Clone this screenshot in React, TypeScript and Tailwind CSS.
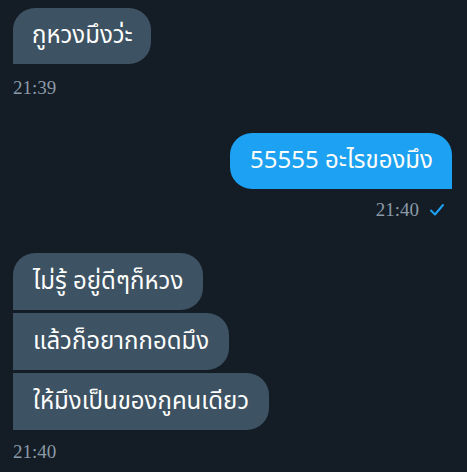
import React from "react";

const Check = () => (
  <svg width="16" height="14" viewBox="0 0 16 14" className="ml-[10px]">
    <path d="M2 7.5 L6 11.5 L14 2" fill="none" stroke="#1da1f2" strokeWidth="2" strokeLinecap="round" strokeLinejoin="round" />
  </svg>
);

export default function App() {
  const thai = { fontFamily: '"Noto Sans Thai", "Noto Sans", "DejaVu Sans", sans-serif' };
  const time = { fontFamily: '"Liberation Serif", serif' };
  return (
    <div className="w-[467px] h-[472px] bg-[#141d26] overflow-hidden relative" style={thai}>
      <div className="flex flex-col pt-[8px]">
        <div className="pl-[13px]">
          <div className="inline-flex items-center h-[56px] pl-[19px] pr-[18px] bg-[#3d5262] text-white text-[24px] rounded-tl-[22px] rounded-tr-[22px] rounded-br-[22px]">
            กูหวงมึงว่ะ
          </div>
        </div>
        <div className="pl-[13px] mt-[14px] text-[19px] text-[#8b9aa6] leading-[20px]" style={time}>
          21:39
        </div>

        <div className="flex justify-end pr-[15px] mt-[35px]">
          <div className="inline-flex items-center h-[56px] pl-[20px] pr-[19px] bg-[#1da1f2] text-white text-[24px] rounded-tl-[22px] rounded-tr-[22px] rounded-bl-[22px]">
            55555 อะไรของมึง
          </div>
        </div>
        <div className="flex justify-end items-center pr-[22px] mt-[11px] text-[19px] text-[#8b9aa6] leading-[20px]" style={time}>
          21:40
          <Check />
        </div>

        <div className="flex flex-col items-start gap-[3px] pl-[13px] mt-[33px]">
          <div className="inline-flex items-center h-[57px] pl-[20px] pr-[20px] bg-[#3d5262] text-white text-[24px] rounded-tl-[22px] rounded-tr-[22px] rounded-br-[22px]">
            ไม่รู้ อยู่ดีๆก็หวง
          </div>
          <div className="inline-flex items-center h-[57px] pl-[20px] pr-[20px] bg-[#3d5262] text-white text-[24px] rounded-tr-[22px] rounded-br-[22px]">
            แล้วก็อยากกอดมึง
          </div>
          <div className="inline-flex items-center h-[57px] pl-[20px] pr-[20px] bg-[#3d5262] text-white text-[24px] rounded-tr-[22px] rounded-br-[22px]">
            ให้มึงเป็นของกูคนเดียว
          </div>
        </div>
        <div className="pl-[13px] mt-[12px] text-[19px] text-[#8b9aa6] leading-[20px]" style={time}>
          21:40
        </div>
      </div>
    </div>
  );
}
